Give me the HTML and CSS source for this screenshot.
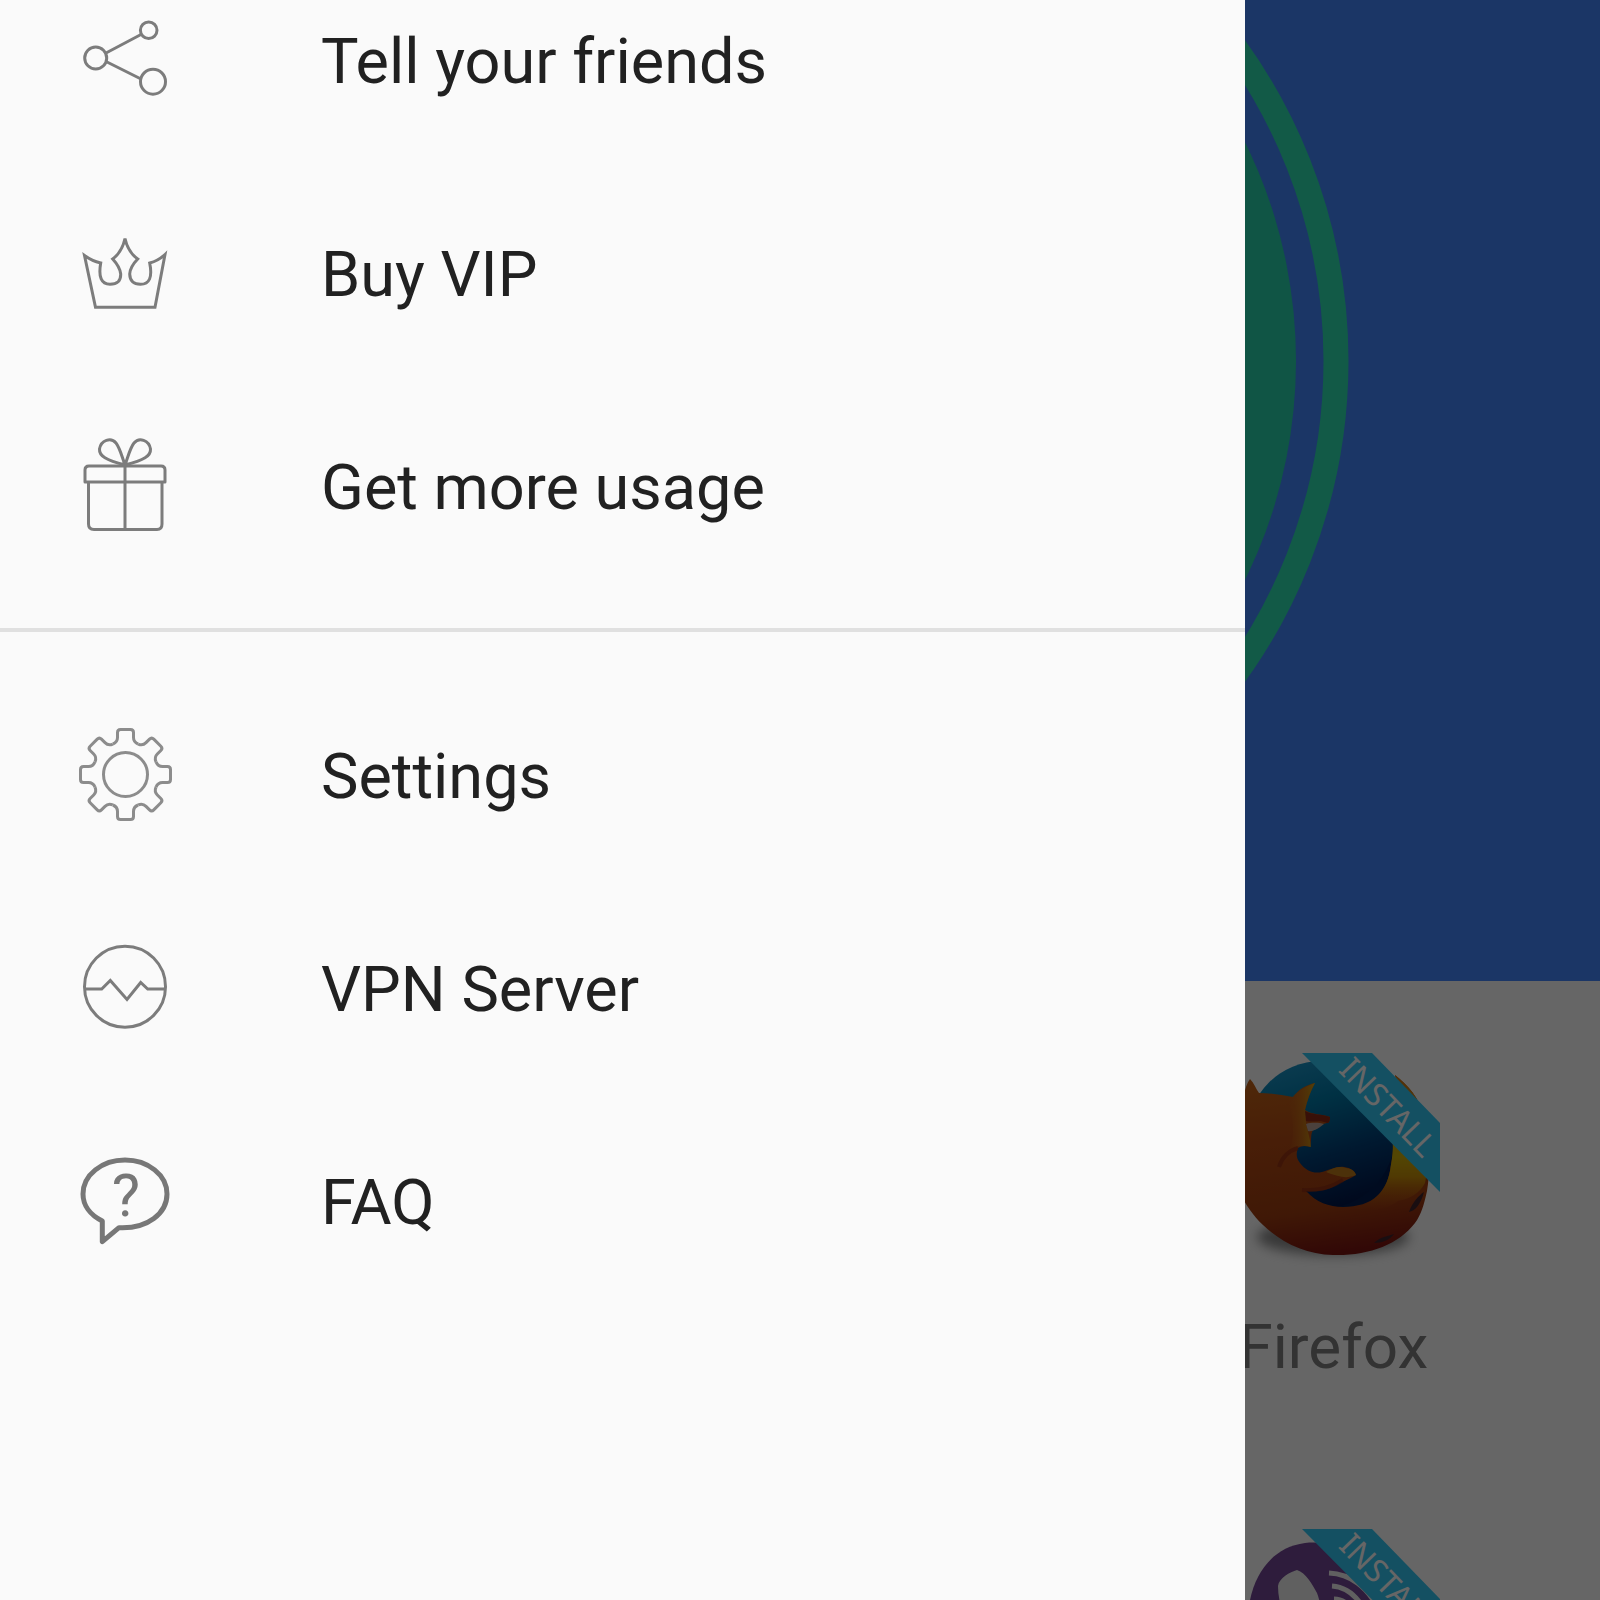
FILE: index.html
```html
<!DOCTYPE html>
<html lang="en">

<head>
    <meta charset="UTF-8">
    <meta name="viewport" content="width=device-width, initial-scale=1.0">
    <title>VPN</title>
    <link rel="stylesheet" href="styles.css">
</head>

<body>
    <main class="page">
        <section class="hero">
            <svg class="dial" viewBox="0 0 1100 1100" aria-hidden="true">
                <circle class="dial-ring" cx="550" cy="551" r="536" />
                <circle class="dial-disc" cx="550" cy="551" r="496" />
            </svg>
        </section>

        <section class="apps">
            <a class="app" href="#">
                <svg class="app-icon" viewBox="0 0 214 214" aria-hidden="true">
                    <defs>
                        <linearGradient id="globe" x1="0.3" y1="0" x2="0.6" y2="1">
                            <stop offset="0" stop-color="#1d96c8" />
                            <stop offset="0.3" stop-color="#0079a8" />
                            <stop offset="0.65" stop-color="#003f78" />
                            <stop offset="1" stop-color="#001548" />
                        </linearGradient>
                        <linearGradient id="fox" x1="0.3" y1="0" x2="0.45" y2="1">
                            <stop offset="0" stop-color="#c46418" />
                            <stop offset="0.35" stop-color="#b44c14" />
                            <stop offset="0.75" stop-color="#a03e10" />
                            <stop offset="1" stop-color="#7c1410" />
                        </linearGradient>
                        <linearGradient id="tail" x1="0" y1="0" x2="0" y2="1">
                            <stop offset="0" stop-color="#d07818" />
                            <stop offset="0.6" stop-color="#d0b008" />
                            <stop offset="0.75" stop-color="#c89008" />
                            <stop offset="1" stop-color="#b04c10" stop-opacity="0" />
                        </linearGradient>
                        <linearGradient id="ear" x1="0" y1="0" x2="1" y2="0">
                            <stop offset="0" stop-color="#c46418" stop-opacity="0" />
                            <stop offset="1" stop-color="#d0a010" />
                        </linearGradient>
                        <filter id="soft" x="-20%" y="-50%" width="140%" height="200%">
                            <feGaussianBlur stdDeviation="6" />
                        </filter>
                    </defs>
                    <ellipse cx="107" cy="184" rx="76" ry="18" fill="#8c8c8c" filter="url(#soft)" />
                    <ellipse cx="118" cy="106" rx="53" ry="51" fill="#001c50" />
                    <circle cx="95" cy="82" r="74" fill="url(#globe)" />
                    <path fill="url(#fox)" d="M24 26C28 30 30 36 33 40C44 40 56 42 67 44C73 36 80 32 89 30C84 39 81 48 79 57C86 62 96 61 104 64C104 68 103 70 101 70C96 71 90 74 87 77C84 82 86 88 84 94C79 92 75 93 72 95C70 100 70 105 74 110C80 118 88 121 96 119C104 117 110 113 118 114C125 115 129 118 130 122C126 125 120 127 114 130C104 137 93 139 80 138C90 149 103 154 117 154C131 154 144 150 151 143C160 135 163 125 165 112C168 96 168 88 163 70C170 60 174 40 169 22C182 32 194 46 196 60C206 88 204 120 201 138C198 152 195 162 189 170C172 192 142 203 107 202C80 201 56 190 37 172C16 152 4 124 6 95C7 72 13 50 18 42C19 36 21 30 24 26Z" />
                    <path fill="url(#ear)" d="M62 46C72 39 80 33 89 30C84 39 81 48 79 57L82 62C76 66 84 80 85 94C79 92 70 93 64 96C70 80 66 60 62 46Z" />
                    <path fill="url(#tail)" d="M169 22C182 32 194 46 196 60C204 86 203 112 199 130C194 140 184 146 172 148C158 158 142 160 128 155C148 150 160 138 164 118C168 96 168 88 163 70C170 60 174 40 169 22Z" />
                    <path fill="#8c2a14" d="M79 58C86 62 96 61 104 64C104 68 103 70 101 70C94 66 86 70 80 68Z" />
                    <path fill="#bca49a" d="M80 71C87 69 94 70 98 71C92 76 86 79 82 78Z" />
                    <path fill="none" stroke="#8c2a14" stroke-width="4" opacity="0.6" d="M72 95C62 98 56 104 53 114M76 137C92 138 106 134 117 127" />
                    <path fill="#c8941c" opacity="0.7" d="M100 119C108 114 114 113 120 115C127 116 129 119 130 122C120 126 114 124 100 119Z" />
                    <path fill="#40242c" d="M198 139C193 142 186 150 183 159C189 158 195 151 198 139ZM148 190C154 184 162 183 168 181C164 187 156 190 148 190Z" />
                    <polygon class="ribbon" points="76,0 146,0 214,70 214,139" />
                    <text class="ribbon-text" x="154" y="62" transform="rotate(46 154 62)">INSTALL</text>
                </svg>
                <span class="app-name">Firefox</span>
            </a>

            <a class="app" href="#" aria-label="Install app">
                <svg class="app-icon" viewBox="0 0 214 214" aria-hidden="true">
                    <path fill="#744696" d="M79 14C118 10 160 34 176 70C190 110 180 160 150 186C110 206 60 200 34 170C14 140 18 100 24 71C30 42 48 18 79 14Z" />
                    <path fill="#f0f0f0" d="M71 41C64 43 53 49 52 57C52 70 56 84 62 94L100 92C96 84 94 72 91 64C86 55 80 44 71 41Z" />
                    <path fill="none" stroke="#f0f0f0" stroke-width="5" d="M103 44C124 45 142 58 152 80M106 57C120 58 130 66 138 80M108 70C116 70 122 74 126 82" />
                    <polygon class="ribbon" points="76,0 146,0 214,70 214,139" />
                    <text class="ribbon-text" x="154" y="62" transform="rotate(46 154 62)">INSTALL</text>
                </svg>
            </a>
        </section>
    </main>

    <div class="scrim"></div>

    <nav class="drawer">
        <ul class="menu">
            <li>
                <a class="menu-item" href="#">
                    <svg class="menu-icon" viewBox="0 0 110 110" aria-hidden="true">
                        <circle cx="25.7" cy="53" r="11" />
                        <circle cx="78.7" cy="25.3" r="8.3" />
                        <circle cx="83" cy="76.7" r="12.5" />
                        <path d="M36 48L71 29.5M36 56.5L71 74" />
                    </svg>
                    <span class="menu-label">Tell your friends</span>
                </a>
            </li>
            <li>
                <a class="menu-item" href="#">
                    <svg class="menu-icon" viewBox="0 0 110 110" aria-hidden="true">
                        <path stroke-linejoin="miter" d="M14.5 37.5Q22 43 30.7 45Q27 66.3 40 66.3Q51 66.3 50.7 56Q50 49 42.7 41Q52 34 55 20.5Q58 34 67.7 41Q60 49 59.7 56Q60 66.3 70.5 66.3Q84 66.3 79.7 45Q88 43 95 36.5L85 89.3H25.5Z" />
                    </svg>
                    <span class="menu-label">Buy VIP</span>
                </a>
            </li>
            <li>
                <a class="menu-item" href="#">
                    <svg class="menu-icon" viewBox="0 0 110 110" aria-hidden="true">
                        <path d="M15 51V39Q15 35 19 35H91Q95 35 95 39V51ZM18.5 51V93Q18.5 98.5 24 98.5H87Q92 98.5 92 93V51M55 35V98" />
                        <path d="M55 34C36 29 29 25 29.5 18C31 9 41 6 46 12C50 17 52 26 55 34C58 26 60 17 64 12C69 6 79 9 80.500 18C81 25 74 29 55 34Z" />
                    </svg>
                    <span class="menu-label">Get more usage</span>
                </a>
            </li>
        </ul>
        <hr class="divider">
        <ul class="menu">
            <li>
                <a class="menu-item" href="#">
                    <svg class="menu-icon menu-icon-light" viewBox="-55.5 -54.5 110 110" aria-hidden="true">
                        <defs>
                            <path id="tooth" d="M-12.6 -30.5Q-8 -32.4 -8 -37V-42Q-8 -45 -5 -45H5Q8 -45 8 -42V-37Q8 -32.4 12.6 -30.5" />
                        </defs>
                        <circle cx="0" cy="0" r="22" />
                        <use href="#tooth" />
                        <use href="#tooth" transform="rotate(45)" />
                        <use href="#tooth" transform="rotate(90)" />
                        <use href="#tooth" transform="rotate(135)" />
                        <use href="#tooth" transform="rotate(180)" />
                        <use href="#tooth" transform="rotate(225)" />
                        <use href="#tooth" transform="rotate(270)" />
                        <use href="#tooth" transform="rotate(315)" />
                    </svg>
                    <span class="menu-label">Settings</span>
                </a>
            </li>
            <li>
                <a class="menu-item" href="#">
                    <svg class="menu-icon" viewBox="0 0 110 110" aria-hidden="true">
                        <circle cx="55" cy="53.7" r="40.5" />
                        <path stroke-linejoin="miter" d="M15 56H31.7L40.3 47.5L57 66.5L70.7 49.5L77.7 56H95" />
                    </svg>
                    <span class="menu-label">VPN Server</span>
                </a>
            </li>
            <li>
                <a class="menu-item" href="#">
                    <svg class="menu-icon menu-icon-bold" viewBox="0 0 110 110" aria-hidden="true">
                        <path d="M32.3 75C20 69 13 59 13 48C13 29 32 14 55 14C78 14 97 29 97 48C97 67 78 83 49 81.7L32.3 95.7Z" />
                        <text class="question" x="56" y="70">?</text>
                    </svg>
                    <span class="menu-label">FAQ</span>
                </a>
            </li>
        </ul>
    </nav>
</body>

</html>
```
FILE: styles.css
```css
* {
    box-sizing: border-box;
}

body {
    margin: 0;
    height: 100vh;
    overflow: hidden;
    position: relative;
    font-family: Roboto, sans-serif;
    font-size: 63px;
    line-height: 72px;
}

a {
    color: inherit;
    text-decoration: none;
}

/* page behind the drawer */
.page {
    height: 100%;
    overflow: hidden;
    background: #fff;
}

.hero {
    height: 981px;
    display: flex;
    justify-content: center;
    align-items: flex-start;
    overflow: hidden;
    background: #4487ff;
}

.dial {
    flex: none;
    width: 1100px;
    height: 1100px;
    margin-top: -190px;
}

.dial-ring {
    fill: none;
    stroke: #2de1b1;
    stroke-width: 25;
}

.dial-disc {
    fill: #28d4ac;
}

.apps {
    display: grid;
    grid-template-columns: repeat(3, 1fr);
    row-gap: 146px;
    padding-top: 72px;
}

.app {
    grid-column: 3;
    display: flex;
    flex-direction: column;
    align-items: center;
    gap: 44px;
    font-size: 62px;
    color: #808080;
}

.app-icon {
    width: 214px;
    height: 214px;
    overflow: visible;
}

/* artwork colours are dimmed by the scrim */
.ribbon {
    fill: #34c8f4;
}

.ribbon-text {
    font-family: "Noto Sans", sans-serif;
    font-size: 32px;
    text-anchor: middle;
    fill: #fff;
}

.scrim {
    position: absolute;
    inset: 0;
    background: rgba(0, 0, 0, 0.6);
}

/* drawer */
.drawer {
    position: absolute;
    inset: 0 auto 0 0;
    width: calc(100% * 249 / 320);
    background: #fafafa;
    color: #212121;
}

.menu {
    list-style: none;
    margin: 0;
    padding: 5px 0 0 70px;
    display: flex;
    flex-direction: column;
    gap: 103px;
}

.menu-item {
    display: flex;
    align-items: center;
    gap: 141px;
}

.menu-label {
    padding-top: 4px;
}

.menu-icon {
    flex: none;
    width: 110px;
    height: 110px;
    fill: none;
    stroke: #7c7c7c;
    stroke-width: 3;
    stroke-linejoin: round;
}

.menu-icon-light {
    stroke: #8c8c8c;
}

.menu-icon-bold {
    stroke: #777;
    stroke-width: 5;
}

.question {
    font-size: 60px;
    text-anchor: middle;
    fill: #777;
    stroke: none;
}

.divider {
    height: 4px;
    margin: 87px 0 83px;
    border: 0;
    background: #e0e0e0;
}
```
